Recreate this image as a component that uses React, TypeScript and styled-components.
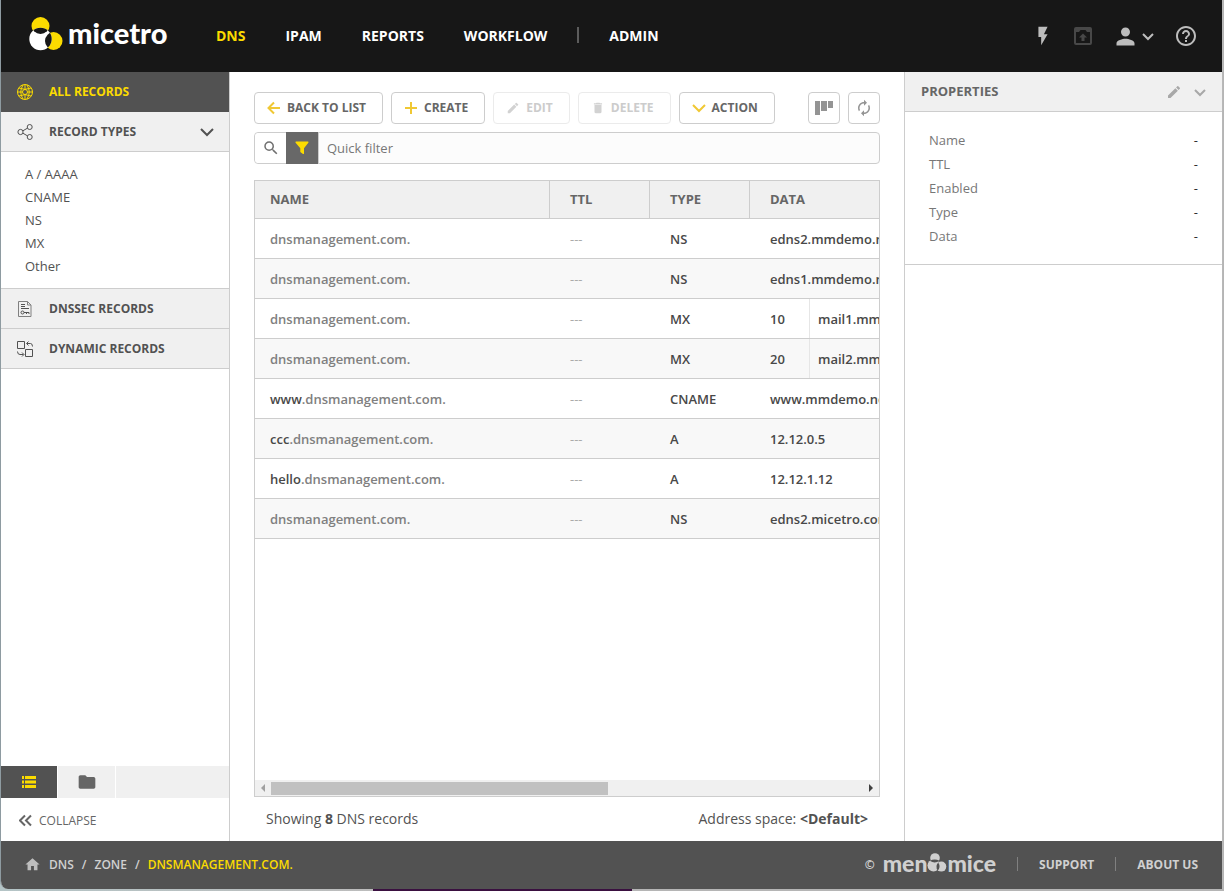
import React, { useRef } from "react";
import styled, { createGlobalStyle } from "styled-components";
import {
  MdAutorenew,
  MdDelete,
  MdEdit,
  MdFlashOn,
  MdFolder,
  MdHelpOutline,
  MdHome,
  MdPerson,
  MdSearch,
} from "react-icons/md";

const color = {
  ink: "#171717",
  slate: "#525252",
  yellow: "#fbdb00",
  amber: "#f0c834",
  panel: "#f0f0f0",
  line: "#cdcdcd",
  text: "#525252",
  muted: "#777777",
  icon: "#bdbdbd",
};

const GlobalStyle = createGlobalStyle`
  *, *::before, *::after { box-sizing: border-box; }
  body {
    margin: 0;
    background: #ffffff;
    color: ${color.text};
    font-family: "Open Sans", "Noto Sans", sans-serif;
    font-size: 13px;
  }
  button, input { font: inherit; color: inherit; }
  button { padding: 0; border: 0; background: none; cursor: pointer; }
  a { color: inherit; text-decoration: none; }
  ul, ol, dl, dd { margin: 0; padding: 0; list-style: none; }
  svg { display: block; flex: none; }
`;

const Desktop = styled.div`
  min-height: 100vh;
  display: flex;
  padding: 0 1px 2px 0;
  background: linear-gradient(
    90deg,
    #b4c4c6 0,
    #bcbcbc 373px,
    #3a1040 373px,
    #3a1040 632px,
    #b5b5b5 632px,
    #b5b5b5 100%
  );
`;

const Shell = styled.div`
  flex: 1;
  min-width: 0;
  display: flex;
  flex-direction: column;
  border-left: 1px solid #8e9ba1;
  border-right: 1px solid #b8b8b8;
  border-bottom-left-radius: 8px;
  overflow: hidden;
  background: #ffffff;
`;

const TopBar = styled.header`
  height: 72px;
  display: flex;
  align-items: center;
  padding: 0 24px 0 28px;
  background: ${color.ink};
  color: #ffffff;
`;

const Brand = styled.a`
  display: flex;
  align-items: center;
  gap: 5px;
  width: 187px;
  padding-bottom: 4px;
`;

const BrandName = styled.span`
  padding-bottom: 2px;
  font-family: Lato, "Open Sans", sans-serif;
  font-size: 29px;
  font-weight: 900;
  line-height: 30px;
`;

const Nav = styled.nav`
  display: flex;
  align-items: center;
  gap: 40px;
  padding-bottom: 2px;
  font-size: 14px;
  font-weight: 700;
`;

const NavLink = styled.a<{ $active?: boolean }>`
  color: ${(p) => (p.$active ? color.yellow : "#ffffff")};
`;

const NavDivider = styled.span`
  width: 2px;
  height: 16px;
  margin: 0 -10px;
  background: #5c5c5c;
`;

const Tools = styled.div`
  display: flex;
  align-items: center;
  gap: 20px;
  margin-left: auto;
`;

const ToolButton = styled.button<{ $dim?: boolean }>`
  display: flex;
  align-items: center;
  gap: 3px;
  color: ${(p) => (p.$dim ? "#484848" : color.icon)};
`;

const Body = styled.div`
  flex: 1;
  display: flex;
  min-height: 0;
`;

const Sidebar = styled.aside`
  width: 229px;
  flex: none;
  display: flex;
  flex-direction: column;
  border-right: 1px solid ${color.line};
`;

const SideItem = styled.button<{ $active?: boolean }>`
  display: flex;
  align-items: center;
  gap: 16px;
  width: 100%;
  height: 40px;
  padding: 0 15px 0 16px;
  font-size: 12px;
  font-weight: 700;
  text-align: left;
  color: ${(p) => (p.$active ? color.yellow : color.text)};
  background: ${(p) => (p.$active ? color.slate : color.panel)};
  border-bottom: 1px solid ${(p) => (p.$active ? color.slate : color.line)};

  span { flex: 1; }
`;

const TypeList = styled.ul`
  padding: 11px 24px 10px;
  border-bottom: 1px solid ${color.line};

  li { line-height: 23px; }
`;

const SideTabs = styled.div`
  display: flex;
  gap: 1px;
  height: 32px;
  margin-top: auto;
`;

const SideTab = styled.button<{ $active?: boolean }>`
  display: grid;
  place-items: center;
  width: ${(p) => (p.$active ? 56 : 57)}px;
  color: ${(p) => (p.$active ? color.yellow : "#666666")};
  background: ${(p) => (p.$active ? color.slate : color.panel)};
`;

const SideTabFill = styled.div`
  flex: 1;
  background: ${color.panel};
`;

const Collapse = styled.button`
  display: flex;
  align-items: center;
  gap: 7px;
  height: 43px;
  padding: 2px 18px 0;
  font-size: 12px;
  color: #666666;
`;

const Main = styled.main`
  flex: 1;
  min-width: 0;
  display: flex;
  flex-direction: column;
  padding: 20px 24px 0;
`;

const Toolbar = styled.div`
  display: flex;
  gap: 8px;
`;

const ActionButton = styled.button`
  display: flex;
  align-items: center;
  gap: 6px;
  height: 32px;
  padding: 0 16px 1px 12px;
  border: 1px solid ${color.line};
  border-radius: 4px;
  font-size: 12px;
  font-weight: 700;
  color: #666666;
  white-space: nowrap;

  svg { color: ${color.amber}; }

  &:disabled {
    color: #cccccc;
    border-color: #ebebeb;
    cursor: default;
    svg { color: #d2d2d2; }
  }
`;

const IconButtons = styled.div`
  display: flex;
  gap: 8px;
  margin-left: auto;
`;

const IconButton = styled.button`
  display: grid;
  place-items: center;
  width: 32px;
  height: 32px;
  border: 1px solid ${color.line};
  border-radius: 4px;
  color: #949494;
`;

const FilterBar = styled.div`
  display: flex;
  height: 32px;
  margin-top: 8px;
  border: 1px solid ${color.line};
  border-radius: 4px;
  background: #fcfcfc;
`;

const FilterButton = styled.button<{ $active?: boolean }>`
  display: grid;
  place-items: center;
  width: ${(p) => (p.$active ? 32 : 31)}px;
  margin: ${(p) => (p.$active ? "-1px 0" : "0")};
  border-radius: ${(p) => (p.$active ? "0" : "4px 0 0 4px")};
  color: ${(p) => (p.$active ? color.yellow : "#707070")};
  background: ${(p) => (p.$active ? "#686868" : "#ffffff")};
`;

const FilterInput = styled.input`
  flex: 1;
  min-width: 0;
  padding: 0 8px;
  border: 0;
  border-left: 1px solid ${color.line};
  outline: 0;
  background: none;

  &::placeholder { color: #777777; opacity: 1; }
`;

const Grid = styled.section`
  flex: 1;
  display: flex;
  flex-direction: column;
  margin-top: 16px;
  border: 1px solid ${color.line};
`;

const GridViewport = styled.div`
  flex: 1;
  overflow: hidden;
`;

const Table = styled.table`
  width: 1098px;
  table-layout: fixed;
  border-collapse: separate;
  border-spacing: 0;
`;

const HeadCell = styled.th<{ $width?: number; $first?: boolean }>`
  width: ${(p) => (p.$width ? `${p.$width}px` : "auto")};
  height: 38px;
  padding: 0 0 2px ${(p) => (p.$first ? 15 : 20)}px;
  border-bottom: 1px solid ${color.line};
  border-right: 1px solid ${color.line};
  background: ${color.panel};
  font-size: 13px;
  font-weight: 700;
  text-align: left;
  color: #666666;
`;

const Row = styled.tr`
  &:nth-child(even) { background: #f8f8f8; }
`;

const Cell = styled.td<{ $tone?: "zone" | "faint"; $first?: boolean }>`
  height: 40px;
  padding: 0 0 0 ${(p) => (p.$first ? 15 : 20)}px;
  border-bottom: 1px solid ${color.line};
  font-weight: ${(p) => (p.$tone === "faint" ? 400 : 600)};
  white-space: nowrap;
  color: ${(p) =>
    p.$tone === "zone" ? "#808080" : p.$tone === "faint" ? "#aaaaaa" : "#484848"};
`;

const Host = styled.span`
  color: #484848;
`;

const MxData = styled.div`
  display: flex;
  align-items: center;
  height: 39px;
`;

const Preference = styled.span`
  display: flex;
  align-items: center;
  align-self: stretch;
  width: 40px;
  margin-right: 8px;
  border-right: 1px solid #e6e6e6;
`;

const ScrollTrack = styled.div`
  display: flex;
  align-items: center;
  height: 16px;
  background: ${color.panel};
`;

const ScrollArrow = styled.button<{ $dim?: boolean }>`
  display: grid;
  place-items: center;
  width: 16px;
  height: 16px;
  color: ${(p) => (p.$dim ? "#a0a0a0" : "#404040")};
`;

const ScrollLane = styled.div`
  flex: 1;
`;

const ScrollThumb = styled.div`
  width: 57%;
  height: 13px;
  background: #c1c1c1;
`;

const StatusLine = styled.div`
  display: flex;
  justify-content: space-between;
  padding: 0 12px;
  font-size: 14px;
  line-height: 44px;
`;

const Details = styled.aside`
  width: 318px;
  flex: none;
  border-left: 1px solid ${color.line};
`;

const DetailsHead = styled.div`
  display: flex;
  align-items: center;
  gap: 12px;
  height: 40px;
  padding: 0 16px;
  background: ${color.panel};
  border-bottom: 1px solid ${color.line};
  color: #a8a8a8;
`;

const DetailsTitle = styled.h2`
  flex: 1;
  margin: 0;
  padding-bottom: 2px;
  font-size: 13px;
  font-weight: 700;
  color: #666666;
`;

const HeadButton = styled.button`
  display: flex;
`;

const PropertyList = styled.dl`
  padding: 16px 24px;
  border-bottom: 1px solid ${color.line};
`;

const Property = styled.div`
  display: flex;
  justify-content: space-between;
  line-height: 24px;
  color: ${color.muted};

  dd { color: #303030; }
`;

const Footer = styled.footer`
  display: flex;
  align-items: center;
  justify-content: space-between;
  height: 48px;
  padding: 0 24px 2px 23px;
  background: ${color.slate};
  color: #d0d0d0;
  font-size: 12px;
  font-weight: 600;
`;

const Crumbs = styled.nav`
  display: flex;
  align-items: center;
  gap: 8px;
`;

const Crumb = styled.a<{ $current?: boolean }>`
  color: ${(p) => (p.$current ? color.yellow : "inherit")};
`;

const FooterLinks = styled.div`
  display: flex;
  align-items: center;
  gap: 21px;
  font-weight: 700;
`;

const Maker = styled.a`
  display: flex;
  align-items: center;
  gap: 8px;
`;

const MakerLogo = styled.span`
  display: flex;
  align-items: center;
  padding-bottom: 2px;
  font-family: Lato, "Open Sans", sans-serif;
  font-size: 23px;
  font-weight: 900;
  line-height: 24px;
`;

const FooterDivider = styled.span`
  width: 1px;
  height: 14px;
  background: #808080;
`;

const BrandMark = () => (
  <svg width="34" height="34" viewBox="0 0 34 34" aria-hidden="true">
    <defs>
      <clipPath id="brand-body">
        <circle cx="11.5" cy="22" r="11.2" />
      </clipPath>
    </defs>
    <circle cx="11.5" cy="9" r="9" fill={color.yellow} />
    <circle cx="24.5" cy="24" r="9" fill={color.yellow} />
    <circle cx="11.5" cy="22" r="11.2" fill="#ffffff" />
    <g clipPath="url(#brand-body)" fill={color.ink}>
      <circle cx="11.5" cy="8" r="9" />
      <circle cx="25" cy="24" r="9" />
    </g>
  </svg>
);

const MakerMark = () => (
  <svg width="20" height="20" viewBox="0 0 20 20" aria-hidden="true">
    <circle cx="8" cy="5" r="4.8" fill="#d0d0d0" />
    <circle cx="6.5" cy="12.6" r="6" fill="#d0d0d0" />
    <circle cx="14.3" cy="13.6" r="5" fill="#d0d0d0" />
    <path d="M2.800 7.800q5 3.400 9.600 0q-4.600-2.600-9.600 0z" fill={color.slate} />
    <path d="M11.200 9.400q-3.400 3.800-.4 8.200q3.200-4 .4-8.200z" fill={color.slate} />
  </svg>
);

const Stroke = ({
  size = 16,
  width = 1,
  d,
}: {
  size?: number;
  width?: number;
  d: string;
}) => (
  <svg
    width={size}
    height={size}
    viewBox={`0 0 ${size} ${size}`}
    fill="none"
    stroke="currentColor"
    strokeWidth={width}
    aria-hidden="true"
  >
    <path d={d} />
  </svg>
);

const GlobeIcon = () => (
  <Stroke
    d="M8 .5a7.500 7.500 0 1 0 0 15a7.500 7.500 0 1 0 0-15zM8 .5v5M8 10.500v5M.5 8h5M10.500 8h5M2 4q6 2.800 12 0M2 12q6-2.800 12 0M6 1Q1.500 8 6 15M10 1q4.500 7 0 14M8 5.500a2.500 2.500 0 1 0 0 5a2.500 2.500 0 1 0 0-5z"
  />
);

const ShareIcon = () => (
  <svg width="16" height="16" viewBox="0 0 16 16" fill="none" stroke="currentColor" aria-hidden="true">
    <circle cx="3.500" cy="8" r="2.600" />
    <circle cx="12.700" cy="3" r="2.500" />
    <circle cx="12.700" cy="13" r="2.500" />
    <path d="M5.900 6.800l4.500-2.600M5.900 9.200l4.500 2.600" />
  </svg>
);

const CertificateIcon = () => (
  <svg width="16" height="16" viewBox="0 0 16 16" fill="none" stroke="#808080" aria-hidden="true">
    <path d="M1.500 .5h9l3.500 3.500v11.500h-12.500zM10.500 .5v3.500h3.500" />
    <path d="M4 3.500h4M4 5.500h4M4 7.500h8" stroke="#525252" />
    <circle cx="5.500" cy="11.500" r="1.500" stroke="#525252" />
    <path d="M7 11.500h5v1.500M9.500 11.500v1.500" stroke="#525252" />
  </svg>
);

const SwapIcon = () => (
  <Stroke d="M.5 .5h7v7h-7zM8.500 8.500h7v7h-7zM10 2.500h3.500q2 0 2 3M11.500 .5l-2 2l2 2M6.500 13.500h-3.500q-2.500 0-2.500-3M5 11.500l2 2l-2 2" />
);

const UploadIcon = () => (
  <svg width="18" height="18" viewBox="0 0 18 18" fill="currentColor" aria-hidden="true">
    <path
      fillRule="evenodd"
      d="M2 0h14a2 2 0 0 1 2 2v14a2 2 0 0 1-2 2H2a2 2 0 0 1-2-2V2a2 2 0 0 1 2-2zM2 5v11h14V5h-3l-1.500-2h-5L5 5z"
    />
    <path d="M9 6.500l4 4h-2.500v3.500h-3v-3.500H5z" />
  </svg>
);

const FunnelIcon = () => (
  <svg width="14" height="14" viewBox="0 0 14 14" fill="currentColor" aria-hidden="true">
    <path d="M1 0.500h12q1 .3.300 1.300L9 7.200v5.300q-.2.800-1 .4L5.300 11V7.200L.6 1.800Q0 .8 1 .5z" />
  </svg>
);

const ColumnsIcon = () => (
  <svg width="18" height="16" viewBox="0 0 18 16" fill="currentColor" aria-hidden="true">
    <path d="M0 1h5v14H0zM6 1h6v10H6zM13 1h5v7h-5z" />
  </svg>
);

const ListIcon = () => (
  <svg width="14" height="12" viewBox="0 0 14 12" fill="currentColor" aria-hidden="true">
    <path d="M0 0h2v3H0zM3 0h11v3H3zM0 4.500h2v3H0zM3 4.500h11v3H3zM0 9h2v3H0zM3 9h11v3H3z" />
  </svg>
);

const Triangle = ({ right }: { right?: boolean }) => (
  <svg width="4" height="8" viewBox="0 0 4 8" fill="currentColor" aria-hidden="true">
    <path d={right ? "M0 0l4 4l-4 4z" : "M4 0L0 4l4 4z"} />
  </svg>
);

const zone = "dnsmanagement.com.";

const records = [
  { type: "NS", data: "edns2.mmdemo.net." },
  { type: "NS", data: "edns1.mmdemo.net." },
  { type: "MX", preference: 10, data: "mail1.mmdemo.net." },
  { type: "MX", preference: 20, data: "mail2.mmdemo.net." },
  { host: "www", type: "CNAME", data: "www.mmdemo.net." },
  { host: "ccc", type: "A", data: "12.12.0.5" },
  { host: "hello", type: "A", data: "12.12.1.12" },
  { type: "NS", data: "edns2.micetro.com." },
];

const recordTypes = ["A / AAAA", "CNAME", "NS", "MX", "Other"];
const properties = ["Name", "TTL", "Enabled", "Type", "Data"];

export default function App() {
  const viewport = useRef<HTMLDivElement>(null);
  const scroll = (left: number) => viewport.current?.scrollBy({ left });

  return (
    <>
      <GlobalStyle />
      <Desktop>
        <Shell>
          <TopBar>
            <Brand href="#">
              <BrandMark />
              <BrandName>micetro</BrandName>
            </Brand>
            <Nav>
              <NavLink href="#" $active>DNS</NavLink>
              <NavLink href="#">IPAM</NavLink>
              <NavLink href="#">REPORTS</NavLink>
              <NavLink href="#">WORKFLOW</NavLink>
              <NavDivider />
              <NavLink href="#">ADMIN</NavLink>
            </Nav>
            <Tools>
              <ToolButton aria-label="Quick commands">
                <MdFlashOn size={22} />
              </ToolButton>
              <ToolButton aria-label="Updates" $dim>
                <UploadIcon />
              </ToolButton>
              <ToolButton aria-label="Account">
                <MdPerson size={27} />
                <Stroke size={12} width={2} d="M1 4l5 5l5-5" />
              </ToolButton>
              <ToolButton aria-label="Help">
                <MdHelpOutline size={24} />
              </ToolButton>
            </Tools>
          </TopBar>

          <Body>
            <Sidebar>
              <SideItem $active>
                <GlobeIcon />
                <span>ALL RECORDS</span>
              </SideItem>
              <SideItem>
                <ShareIcon />
                <span>RECORD TYPES</span>
                <Stroke size={14} width={2} d="M1 4l6 6l6-6" />
              </SideItem>
              <TypeList>
                {recordTypes.map((name) => (
                  <li key={name}>
                    <a href="#">{name}</a>
                  </li>
                ))}
              </TypeList>
              <SideItem>
                <CertificateIcon />
                <span>DNSSEC RECORDS</span>
              </SideItem>
              <SideItem>
                <SwapIcon />
                <span>DYNAMIC RECORDS</span>
              </SideItem>
              <SideTabs>
                <SideTab $active aria-label="List">
                  <ListIcon />
                </SideTab>
                <SideTab aria-label="Folders">
                  <MdFolder size={20} />
                </SideTab>
                <SideTabFill />
              </SideTabs>
              <Collapse>
                <Stroke size={13} width={2} d="M6 1.500l-5 5l5 5M12 1.500l-5 5l5 5" />
                COLLAPSE
              </Collapse>
            </Sidebar>

            <Main>
              <Toolbar>
                <ActionButton>
                  <Stroke size={14} width={2} d="M13 7H2M7 1.500L1.500 7L7 12.500" />
                  BACK TO LIST
                </ActionButton>
                <ActionButton>
                  <Stroke size={14} width={2} d="M7 1v12M1 7h12" />
                  CREATE
                </ActionButton>
                <ActionButton disabled>
                  <MdEdit size={14} />
                  EDIT
                </ActionButton>
                <ActionButton disabled>
                  <MdDelete size={14} />
                  DELETE
                </ActionButton>
                <ActionButton>
                  <Stroke size={14} width={2} d="M1 4l6 6l6-6" />
                  ACTION
                </ActionButton>
                <IconButtons>
                  <IconButton aria-label="Columns">
                    <ColumnsIcon />
                  </IconButton>
                  <IconButton aria-label="Refresh">
                    <MdAutorenew size={18} />
                  </IconButton>
                </IconButtons>
              </Toolbar>

              <FilterBar>
                <FilterButton aria-label="Search">
                  <MdSearch size={18} />
                </FilterButton>
                <FilterButton $active aria-label="Filter">
                  <FunnelIcon />
                </FilterButton>
                <FilterInput aria-label="Quick filter" placeholder="Quick filter" />
              </FilterBar>

              <Grid>
                <GridViewport ref={viewport}>
                  <Table>
                    <thead>
                      <tr>
                        <HeadCell $width={295} $first>NAME</HeadCell>
                        <HeadCell $width={100}>TTL</HeadCell>
                        <HeadCell $width={100}>TYPE</HeadCell>
                        <HeadCell>DATA</HeadCell>
                      </tr>
                    </thead>
                    <tbody>
                      {records.map((r, i) => (
                        <Row key={i}>
                          <Cell $first $tone="zone">
                            {r.host && <Host>{r.host}</Host>}
                            {r.host ? `.${zone}` : zone}
                          </Cell>
                          <Cell $tone="faint">---</Cell>
                          <Cell>{r.type}</Cell>
                          <Cell>
                            {r.preference ? (
                              <MxData>
                                <Preference>{r.preference}</Preference>
                                {r.data}
                              </MxData>
                            ) : (
                              r.data
                            )}
                          </Cell>
                        </Row>
                      ))}
                    </tbody>
                  </Table>
                </GridViewport>
                <ScrollTrack>
                  <ScrollArrow $dim aria-label="Scroll left" onClick={() => scroll(-100)}>
                    <Triangle />
                  </ScrollArrow>
                  <ScrollLane>
                    <ScrollThumb />
                  </ScrollLane>
                  <ScrollArrow aria-label="Scroll right" onClick={() => scroll(100)}>
                    <Triangle right />
                  </ScrollArrow>
                </ScrollTrack>
              </Grid>

              <StatusLine>
                <span>
                  Showing <b>8</b> DNS records
                </span>
                <span>
                  Address space: <b>&lt;Default&gt;</b>
                </span>
              </StatusLine>
            </Main>

            <Details>
              <DetailsHead>
                <DetailsTitle>PROPERTIES</DetailsTitle>
                <HeadButton aria-label="Edit properties">
                  <MdEdit size={16} />
                </HeadButton>
                <HeadButton aria-label="Toggle properties">
                  <Stroke size={12} width={2} d="M1 4l5 5l5-5" />
                </HeadButton>
              </DetailsHead>
              <PropertyList>
                {properties.map((name) => (
                  <Property key={name}>
                    <dt>{name}</dt>
                    <dd>-</dd>
                  </Property>
                ))}
              </PropertyList>
            </Details>
          </Body>

          <Footer>
            <Crumbs>
              <MdHome size={17} color={color.icon} />
              <Crumb href="#">DNS</Crumb>
              <span>/</span>
              <Crumb href="#">ZONE</Crumb>
              <span>/</span>
              <Crumb href="#" $current>DNSMANAGEMENT.COM.</Crumb>
            </Crumbs>
            <FooterLinks>
              <Maker href="#">
                <span>©</span>
                <MakerLogo>
                  <span>men</span>
                  <MakerMark />
                  <span>mice</span>
                </MakerLogo>
              </Maker>
              <FooterDivider />
              <a href="#">SUPPORT</a>
              <FooterDivider />
              <a href="#">ABOUT US</a>
            </FooterLinks>
          </Footer>
        </Shell>
      </Desktop>
    </>
  );
}
